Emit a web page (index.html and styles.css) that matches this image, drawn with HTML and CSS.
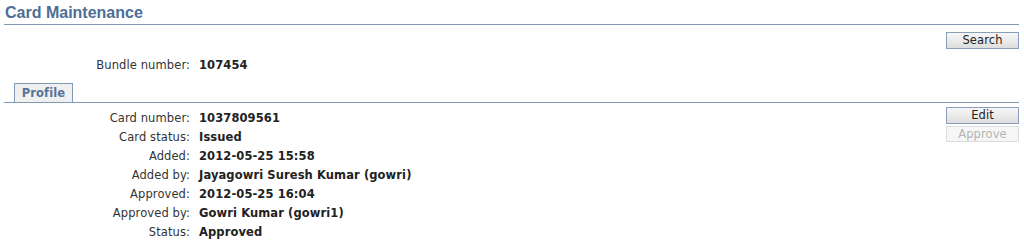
FILE: index.html
```html
<!DOCTYPE html>
<html lang="en">
<head>
    <meta charset="UTF-8">
    <title>Card Maintenance</title>
    <link rel="stylesheet" href="styles.css">
</head>
<body>

<h1 class="page-title">Card Maintenance</h1>

<div class="toolbar">
    <button class="btn">Search</button>
</div>

<div class="fields bundle">
    <span class="label">Bundle number:</span>
    <span class="value">107454</span>
</div>

<div class="tabs">
    <span class="tab active">Profile</span>
</div>

<div class="tab-body">
    <div class="fields">
        <span class="label">Card number:</span>
        <span class="value">1037809561</span>
        <span class="label">Card status:</span>
        <span class="value">Issued</span>
        <span class="label">Added:</span>
        <span class="value">2012-05-25 15:58</span>
        <span class="label">Added by:</span>
        <span class="value">Jayagowri Suresh Kumar (gowri)</span>
        <span class="label">Approved:</span>
        <span class="value">2012-05-25 16:04</span>
        <span class="label">Approved by:</span>
        <span class="value">Gowri Kumar (gowri1)</span>
        <span class="label">Status:</span>
        <span class="value">Approved</span>
    </div>
    <div class="actions">
        <button class="btn">Edit</button>
        <button class="btn" disabled>Approve</button>
    </div>
</div>

</body>
</html>
```

FILE: styles.css
```css
body {
    margin: 0;
    padding: 0 5px 0 4px;
    background: white;
    font-family: "DejaVu Sans", Verdana, sans-serif;
    font-size: 11.5px;
    letter-spacing: 0.1px;
    color: #333333;
}

.page-title {
    margin: 0;
    padding: 4px 0 3px 1px;
    font-family: "Liberation Sans", Arial, sans-serif;
    font-size: 16px;
    font-weight: bold;
    line-height: 17px;
    letter-spacing: 0;
    color: #4e6e95;
    border-bottom: 1px solid #8099b7;
}

.toolbar {
    display: flex;
    justify-content: flex-end;
    padding-top: 7px;
}

.btn {
    width: 73px;
    height: 17px;
    padding: 0;
    font-family: "DejaVu Sans", Verdana, sans-serif;
    font-size: 11.5px;
    letter-spacing: 0.1px;
    line-height: 15px;
    color: #222222;
    background: linear-gradient(to bottom, #f7f7f7 0%, #eaeaea 55%, #dddddd 100%);
    border: 1px solid #8a9fbb;
    border-radius: 0;
}

.btn:disabled {
    height: 16px;
    color: #b4b4b4;
    background: #f6f6f6;
    border-color: #d8dde4;
}

.fields {
    display: grid;
    grid-template-columns: 186px auto;
    column-gap: 9px;
    row-gap: 0;
    justify-content: start;
}

.fields.bundle {
    margin-top: 7px;
}

.label {
    text-align: right;
    line-height: 19px;
}

.value {
    font-weight: bold;
    line-height: 19px;
    color: #222222;
}

.tabs {
    display: flex;
    margin-top: 8px;
    padding-left: 10px;
    border-bottom: 1px solid #8099b7;
}

.tab {
    width: 57px;
    height: 18px;
    line-height: 18px;
    text-align: center;
    font-weight: bold;
    color: #55749a;
    background: #f0f0f0;
    border: 1px solid #8099b7;
    border-bottom: none;
}

.tab-body {
    display: flex;
    justify-content: space-between;
    align-items: flex-start;
    padding-top: 4px;
}

.tab-body .fields {
    margin-top: 2px;
}

.actions {
    display: flex;
    flex-direction: column;
    gap: 2px;
}
```
